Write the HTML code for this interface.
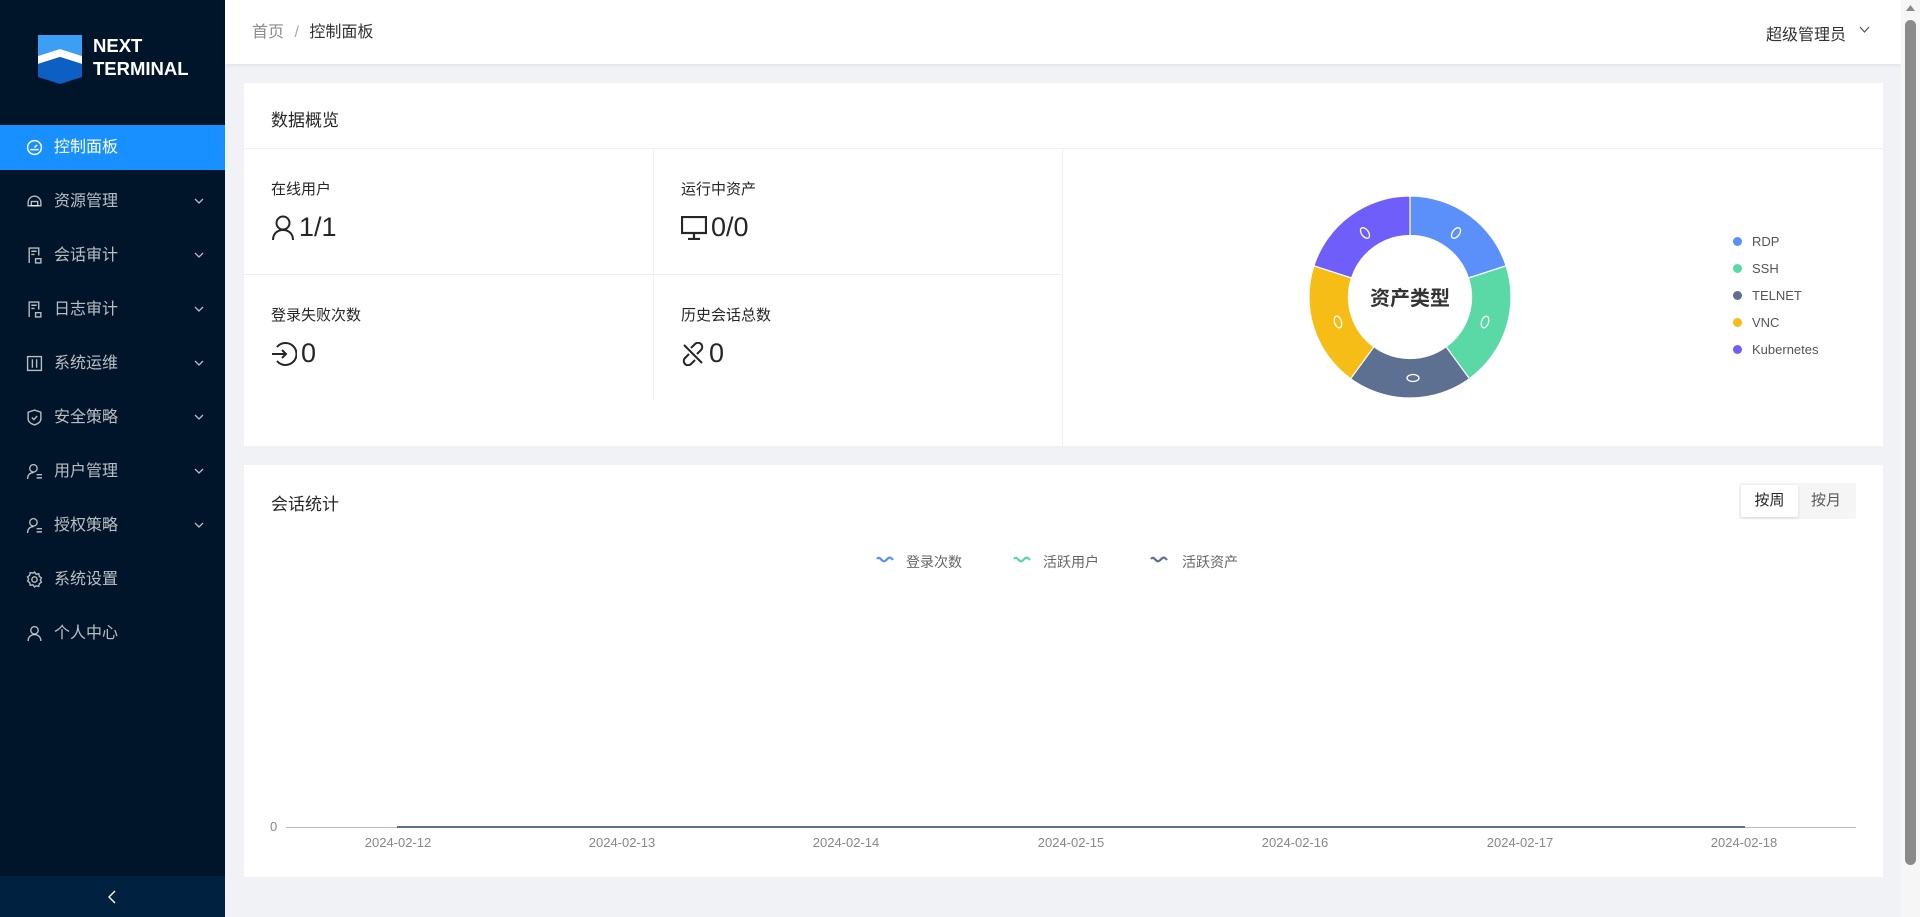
<!DOCTYPE html>
<html><head><meta charset="utf-8"><style>
*{margin:0;padding:0;box-sizing:border-box}
body{width:1920px;height:917px;overflow:hidden;background:#f0f2f5;font-family:"Liberation Sans","Noto Sans CJK SC",sans-serif;position:relative;color:#262626}
.abs{position:absolute}
#side{left:0;top:0;width:225px;height:917px;background:#001529}
.mi{position:absolute;left:0;width:225px;height:45px;color:rgba(255,255,255,.72);font-size:16px;line-height:45px}
.mi .t{position:absolute;left:54px}
.mi svg.ic{position:absolute;left:26px;top:14px}
.mi .ch{position:absolute;left:194px;top:18px}
.card{position:absolute;background:#fff}
.lbl{position:absolute;font-size:15px;color:#262626}
.val{position:absolute;font-size:27px;color:#262626;display:flex;align-items:center;gap:4px}
.lg{position:absolute;font-size:13px;color:#555;left:1752px}
.dot{position:absolute;left:1733px;width:9px;height:9px;border-radius:50%}
.dt{position:absolute;top:835px;font-size:13px;color:#888;width:100px;text-align:center}
</style></head><body>
<div id="side" class="abs">
 <svg class="abs" style="left:38px;top:35px" width="44" height="49" viewBox="0 0 44 49"><path d="M0 0H44V21L22 14L0 21Z" fill="#3ba0f5"/><path d="M0 21L22 14L44 21V29L22 22L0 29Z" fill="#fff"/><path d="M0 29L22 22L44 29V42L22 49L0 42Z" fill="#0d5fc4"/></svg>
 <div class="abs" style="left:93px;top:34px;color:#fff;font-weight:bold;font-size:18.5px;line-height:23px">NEXT<br>TERMINAL</div>
 <div class="mi" style="top:125px;background:#1890ff;color:#fff"><svg class="ic" width="17" height="17" viewBox="0 0 16 16" fill="none" stroke="#fff" stroke-width="1.4"><circle cx="8" cy="8" r="6.5"/><path d="M8 8L10.5 5.5M4 10h8"/></svg><span class="t">控制面板</span></div>
 <div class="mi" style="top:179px"><svg class="ic" width="17" height="17" viewBox="0 0 16 16" fill="none" stroke="currentColor" stroke-width="1.3"><path d="M2 9a6 6 0 0112 0v3H2z"/><rect x="5" y="8" width="6" height="4"/></svg><span class="t">资源管理</span><svg class="ch" width="10" height="8"><path d="M1 2l4 4 4-4" stroke="currentColor" fill="none" stroke-width="1.3"/></svg></div>
 <div class="mi" style="top:233px"><svg class="ic" width="17" height="17" viewBox="0 0 16 16" fill="none" stroke="currentColor" stroke-width="1.3"><path d="M3 15V1h9v7"/><path d="M5 4h5M5 7h3"/><rect x="9" y="11" width="5" height="4"/></svg><span class="t">会话审计</span><svg class="ch" width="10" height="8"><path d="M1 2l4 4 4-4" stroke="currentColor" fill="none" stroke-width="1.3"/></svg></div>
 <div class="mi" style="top:287px"><svg class="ic" width="17" height="17" viewBox="0 0 16 16" fill="none" stroke="currentColor" stroke-width="1.3"><path d="M3 15V1h9v7"/><path d="M5 4h5M5 7h3"/><rect x="9" y="11" width="5" height="4"/></svg><span class="t">日志审计</span><svg class="ch" width="10" height="8"><path d="M1 2l4 4 4-4" stroke="currentColor" fill="none" stroke-width="1.3"/></svg></div>
 <div class="mi" style="top:341px"><svg class="ic" width="17" height="17" viewBox="0 0 16 16" fill="none" stroke="currentColor" stroke-width="1.3"><rect x="1.5" y="1.5" width="13" height="13"/><path d="M6 4v8M10 4v8"/></svg><span class="t">系统运维</span><svg class="ch" width="10" height="8"><path d="M1 2l4 4 4-4" stroke="currentColor" fill="none" stroke-width="1.3"/></svg></div>
 <div class="mi" style="top:395px"><svg class="ic" width="17" height="17" viewBox="0 0 16 16" fill="none" stroke="currentColor" stroke-width="1.3"><path d="M8 1l6 2v6c0 3-3 5-6 6-3-1-6-3-6-6V3z"/><path d="M5.5 8l2 2 3-3.5"/></svg><span class="t">安全策略</span><svg class="ch" width="10" height="8"><path d="M1 2l4 4 4-4" stroke="currentColor" fill="none" stroke-width="1.3"/></svg></div>
 <div class="mi" style="top:449px"><svg class="ic" width="17" height="17" viewBox="0 0 16 16" fill="none" stroke="currentColor" stroke-width="1.3"><circle cx="7" cy="5" r="3.5"/><path d="M1.5 15c0-4 2.5-6 5.5-6M10 11h5M10 14h5"/></svg><span class="t">用户管理</span><svg class="ch" width="10" height="8"><path d="M1 2l4 4 4-4" stroke="currentColor" fill="none" stroke-width="1.3"/></svg></div>
 <div class="mi" style="top:503px"><svg class="ic" width="17" height="17" viewBox="0 0 16 16" fill="none" stroke="currentColor" stroke-width="1.3"><circle cx="7" cy="5" r="3.5"/><path d="M1.5 15c0-4 2.5-6 5.5-6M10 11h5M10 14h5"/></svg><span class="t">授权策略</span><svg class="ch" width="10" height="8"><path d="M1 2l4 4 4-4" stroke="currentColor" fill="none" stroke-width="1.3"/></svg></div>
 <div class="mi" style="top:557px"><svg class="ic" width="17" height="17" viewBox="0 0 16 16" fill="none" stroke="currentColor" stroke-width="1.3"><circle cx="8" cy="8" r="2.5"/><path d="M8 1l1.5 2 2.5-.5.5 2.5 2 1.5-1 2 1 2-2 1.5-.5 2.5-2.5-.5L8 15l-1.5-2-2.5.5-.5-2.5-2-1.5 1-2-1-2 2-1.5.5-2.5 2.5.5z"/></svg><span class="t">系统设置</span></div>
 <div class="mi" style="top:611px"><svg class="ic" width="17" height="17" viewBox="0 0 16 16" fill="none" stroke="currentColor" stroke-width="1.3"><circle cx="8" cy="5" r="3.5"/><path d="M2 15c0-4 3-6 6-6s6 2 6 6"/></svg><span class="t">个人中心</span></div>
 <div class="abs" style="left:0;top:876px;width:225px;height:41px;background:#002140"><svg class="abs" style="left:107px;top:14px" width="10" height="14"><path d="M8 1L2 7l6 6" stroke="#fff" fill="none" stroke-width="1.4"/></svg></div>
</div>
<div class="abs" style="left:225px;top:0;width:1676px;height:64px;background:#fff;box-shadow:0 1px 4px rgba(0,21,41,.08)">
 <div class="abs" style="left:27px;top:18px;font-size:16px;color:#8c8c8c">首页 <span style="margin:0 6px;color:#aaa">/</span> <span style="color:#333">控制面板</span></div>
 <div class="abs" style="left:1541px;top:21px;font-size:16px;color:#333">超级管理员</div>
 <svg class="abs" style="left:1634px;top:26px" width="11" height="8"><path d="M1 1l4.5 5L10 1" stroke="#555" fill="none" stroke-width="1.2"/></svg>
</div>
<div class="card" style="left:244px;top:83px;width:1639px;height:363px">
 <div class="abs" style="left:27px;top:23px;font-size:17px;color:#262626">数据概览</div>
 <div class="abs" style="left:0;top:65px;width:1639px;height:1px;background:#f0f0f0"></div>
 <div class="abs" style="left:409px;top:66px;width:1px;height:251px;background:#f0f0f0"></div>
 <div class="abs" style="left:818px;top:66px;width:1px;height:297px;background:#f0f0f0"></div>
 <div class="abs" style="left:0;top:191px;width:818px;height:1px;background:#f0f0f0"></div>
</div>
<div class="lbl" style="left:271px;top:178px">在线用户</div>
<div class="val" style="left:271px;top:212px"><svg width="24" height="26" viewBox="0 0 24 26" fill="none" stroke="#262626" stroke-width="2"><circle cx="12" cy="8" r="6.5"/><path d="M2 25c0-6 4-10 10-10s10 4 10 10"/></svg>1/1</div>
<div class="lbl" style="left:681px;top:178px">运行中资产</div>
<div class="val" style="left:681px;top:212px"><svg width="26" height="24" viewBox="0 0 26 24" fill="none" stroke="#262626" stroke-width="2.2"><rect x="1" y="1" width="24" height="16"/><path d="M13 17v5M7 23h12"/></svg>0/0</div>
<div class="lbl" style="left:271px;top:304px">登录失败次数</div>
<div class="val" style="left:271px;top:338px"><svg width="26" height="26" viewBox="0 0 26 26" fill="none" stroke="#262626" stroke-width="2"><path d="M6 6a11 11 0 110 14"/><path d="M1 13h14M11 9l4 4-4 4"/></svg>0</div>
<div class="lbl" style="left:681px;top:304px">历史会话总数</div>
<div class="val" style="left:681px;top:338px"><svg width="24" height="24" viewBox="0 0 24 24" fill="none" stroke="#262626" stroke-width="2"><path d="M10 6l4-4a4 4 0 016 6l-4 4M14 18l-4 4a4 4 0 01-6-6l4-4M3 3l18 18"/></svg>0</div>
<svg class="abs" style="left:1300px;top:188px" width="220" height="218" viewBox="-110 -109 220 218">
 <g stroke="#fff" stroke-width="1.2">
  <path d="M0-101A101 101 0 0 1 96.1-31.2L58.5-19A61.5 61.5 0 0 0 0-61.5Z" fill="#5b8ff9"/>
  <path d="M96.1-31.2A101 101 0 0 1 59.4 81.7L36.1 49.8A61.5 61.5 0 0 0 58.5-19Z" fill="#5ad8a6"/>
  <path d="M59.4 81.7A101 101 0 0 1-59.4 81.7L-36.1 49.8A61.5 61.5 0 0 0 36.1 49.8Z" fill="#5d7092"/>
  <path d="M-59.4 81.7A101 101 0 0 1-96.1-31.2L-58.5-19A61.5 61.5 0 0 0-36.1 49.8Z" fill="#f6bd16"/>
  <path d="M-96.1-31.2A101 101 0 0 1 0-101L0-61.5A61.5 61.5 0 0 0-58.5-19Z" fill="#6f5ef9"/>
 </g>
 <g fill="none" stroke="#fff" stroke-width="1.3">
  <ellipse cx="46" cy="-64" rx="3.5" ry="6" transform="rotate(36 46 -64)"/>
  <ellipse cx="75" cy="25" rx="3.5" ry="6" transform="rotate(18 75 25)"/>
  <ellipse cx="3" cy="81" rx="6" ry="3.5"/>
  <ellipse cx="-72" cy="25" rx="3.5" ry="6" transform="rotate(-18 -72 25)"/>
  <ellipse cx="-45" cy="-64" rx="3.5" ry="6" transform="rotate(-36 -45 -64)"/>
 </g>
 <text x="0" y="8" font-size="20" font-weight="bold" fill="#333" text-anchor="middle" font-family="Noto Sans CJK SC,sans-serif">资产类型</text>
</svg>
<div class="dot" style="top:237px;background:#5b8ff9"></div><div class="lg" style="top:234px">RDP</div>
<div class="dot" style="top:264px;background:#5ad8a6"></div><div class="lg" style="top:261px">SSH</div>
<div class="dot" style="top:291px;background:#5d7092"></div><div class="lg" style="top:288px">TELNET</div>
<div class="dot" style="top:318px;background:#f6bd16"></div><div class="lg" style="top:315px">VNC</div>
<div class="dot" style="top:345px;background:#6f5ef9"></div><div class="lg" style="top:342px">Kubernetes</div>

<div class="card" style="left:244px;top:465px;width:1639px;height:412px"></div>
<div class="abs" style="left:271px;top:490px;font-size:17px">会话统计</div>
<div class="abs" style="left:1739px;top:483px;width:117px;height:36px;background:#f5f5f5;border-radius:2px">
 <div class="abs" style="left:2px;top:2px;width:57px;height:32px;background:#fff;border-radius:2px;box-shadow:0 1px 3px rgba(0,0,0,.12);text-align:center;line-height:32px;font-size:15px;color:#262626">按周</div>
 <div class="abs" style="left:59px;top:2px;width:56px;height:32px;text-align:center;line-height:32px;font-size:15px;color:#595959">按月</div>
</div>
<svg class="abs" style="left:875px;top:555px" width="20" height="12"><path d="M2 4c3-4 5 4 8 2s4-6 8-1" stroke="#5b8ff9" stroke-width="2.2" fill="none"/></svg>
<div class="abs" style="left:906px;top:552px;font-size:14px;color:#666">登录次数</div>
<svg class="abs" style="left:1012px;top:555px" width="20" height="12"><path d="M2 4c3-4 5 4 8 2s4-6 8-1" stroke="#5ad8a6" stroke-width="2.2" fill="none"/></svg>
<div class="abs" style="left:1043px;top:552px;font-size:14px;color:#666">活跃用户</div>
<svg class="abs" style="left:1149px;top:555px" width="20" height="12"><path d="M2 4c3-4 5 4 8 2s4-6 8-1" stroke="#5d7092" stroke-width="2.2" fill="none"/></svg>
<div class="abs" style="left:1182px;top:552px;font-size:14px;color:#666">活跃资产</div>
<div class="abs" style="left:270px;top:819px;font-size:13px;color:#888">0</div>
<div class="abs" style="left:286px;top:827px;width:1570px;height:1px;background:#bbb"></div>
<div class="abs" style="left:397px;top:826px;width:1348px;height:2px;background:#5d7092"></div>
<div class="dt" style="left:348px">2024-02-12</div>
<div class="dt" style="left:572px">2024-02-13</div>
<div class="dt" style="left:796px">2024-02-14</div>
<div class="dt" style="left:1021px">2024-02-15</div>
<div class="dt" style="left:1245px">2024-02-16</div>
<div class="dt" style="left:1470px">2024-02-17</div>
<div class="dt" style="left:1694px">2024-02-18</div>
<div class="abs" style="left:1901px;top:0;width:19px;height:917px;background:#f6f6f6"></div>
<svg class="abs" style="left:1905px;top:4px" width="11" height="8"><path d="M5.5 1L10 7H1z" fill="#8a8a8a"/></svg>
<div class="abs" style="left:1905px;top:20px;width:11px;height:845px;background:#8a8a8a;border-radius:6px"></div>
</body></html>
